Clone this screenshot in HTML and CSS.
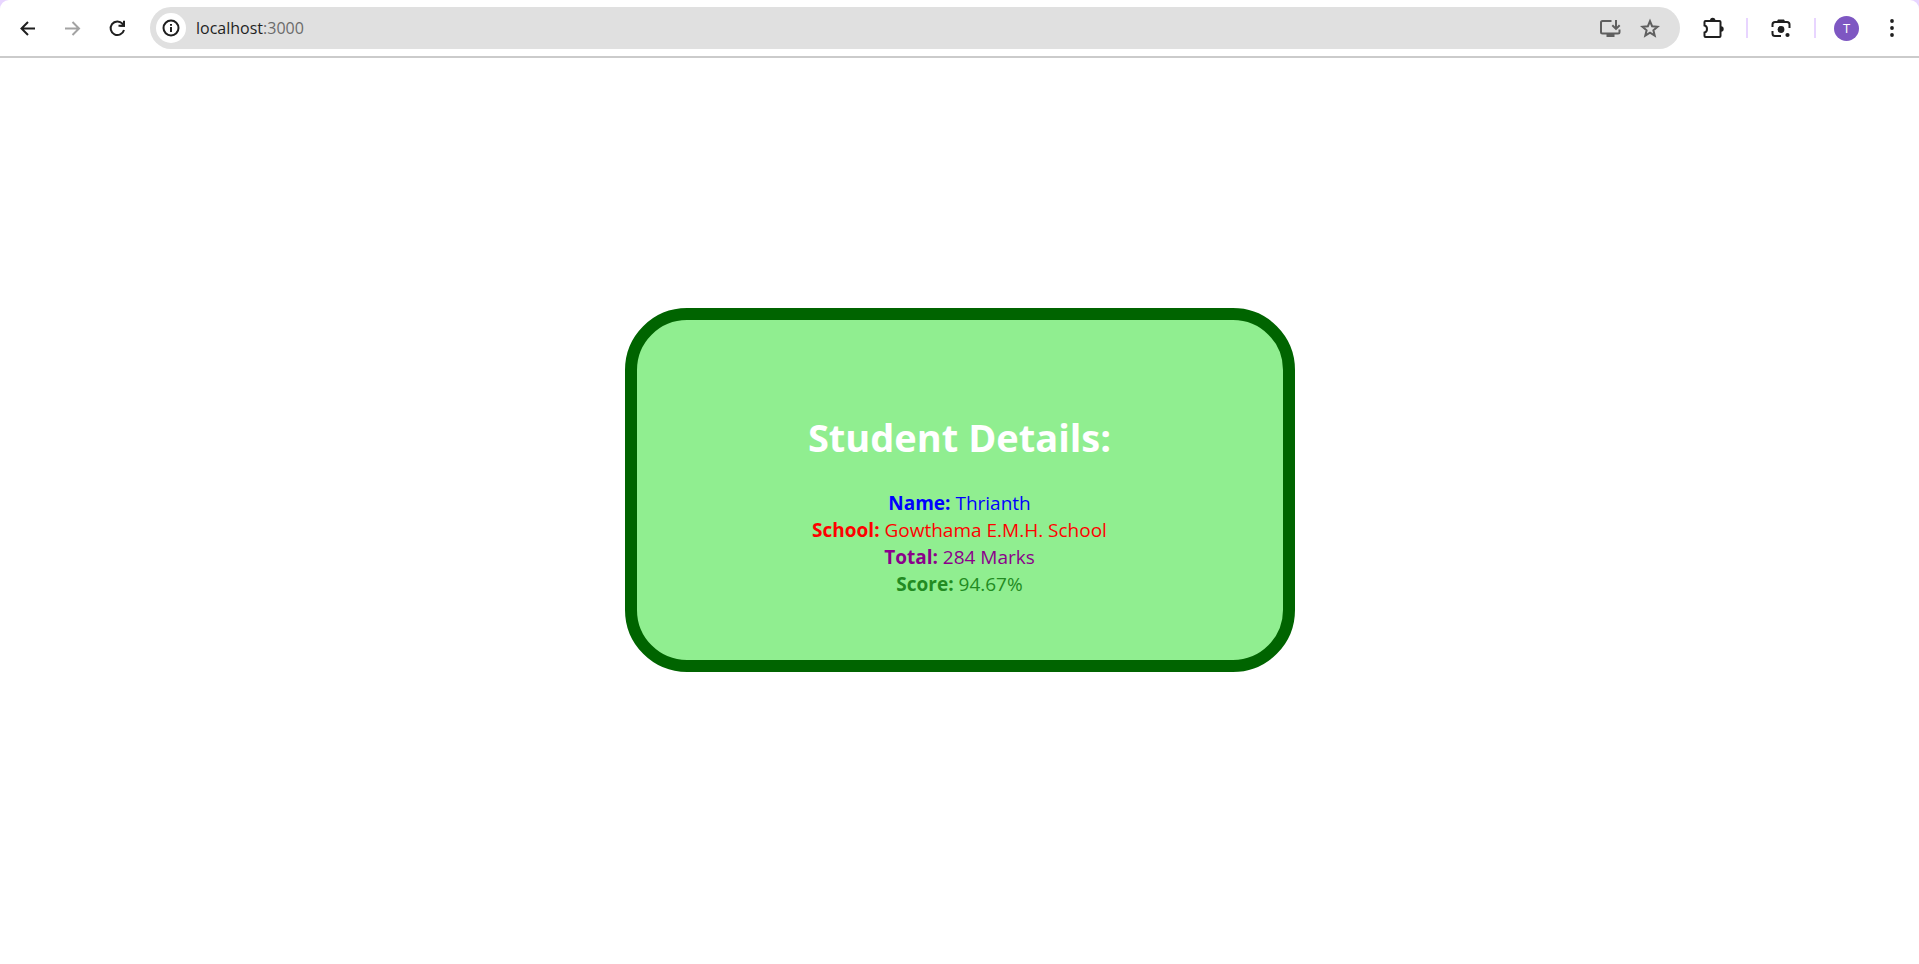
FILE: index.html
```html
<!DOCTYPE html>
<html lang="en">
<head>
<meta charset="utf-8">
<title>Student Details</title>
<link rel="stylesheet" href="styles.css">
</head>
<body>
<header class="toolbar-back">
<div class="toolbar">
  <nav class="nav" aria-label="Browser navigation">
    <button class="icon-button" type="button" aria-label="Back">
      <svg class="icon stroke" viewBox="0 0 20 20"><path d="M18 10.500H4M11 4l-6.500 6.500 6.500 6.500"/></svg>
    </button>
    <button class="icon-button muted" type="button" aria-label="Forward">
      <svg class="icon stroke" viewBox="0 0 20 20"><path d="M3 10.500h14M10.500 4l6.500 6.500-6.500 6.500"/></svg>
    </button>
    <button class="icon-button" type="button" aria-label="Reload">
      <svg class="icon stroke" viewBox="0 0 20 20"><path d="M17 12A6.800 6.800 0 1 1 15.500 5.700L17 7.200M17 2.800v5h-5.500"/><path class="fill" d="M18 2.800v6h-5z"/></svg>
    </button>
  </nav>
  <div class="address">
    <button class="site-info" type="button" aria-label="Site information">
      <svg class="icon stroke" viewBox="0 0 20 20"><circle cx="10" cy="10" r="7.500"/><path d="M10 9v5M10 6v1.800"/></svg>
    </button>
    <a class="url" href="#">localhost<span class="port">:3000</span></a>
    <button class="icon-button address-button" type="button" aria-label="Install app">
      <svg class="icon-wide stroke" viewBox="0 0 22 22"><path d="M12.500 4H3.500Q2 4 2 5.500V15q0 1.500 1.500 1.500H19q1.500 0 1.500-1.500v-2.500M17 3v8.500M13.300 8.200l3.700 3.700 3.700-3.700"/><path class="solid" d="M7.500 17h8v3h-8z"/></svg>
    </button>
    <button class="icon-button address-button" type="button" aria-label="Bookmark this page">
      <svg class="icon stroke" viewBox="0 0 20 20"><path d="M10 3.200l2.100 5 5.500.5-4.200 3.600 1.300 5.300-4.700-2.900-4.700 2.900 1.300-5.300-4.200-3.600 5.500-.5z"/></svg>
    </button>
  </div>
  <div class="actions">
    <button class="icon-button" type="button" aria-label="Extensions">
      <svg class="icon-wide stroke" viewBox="0 0 22 22"><path d="M3.500 4h14q1 0 1 1v14q0 1-1 1h-14q-1 0-1-1v-3.500Q5 15 5 12T2.500 8.500V5q0-1 1-1z"/><path class="fill" d="M8 3.500a2.700 2.700 0 0 1 5.400 0zM19 9.300a2.700 2.700 0 0 1 0 5.400z"/></svg>
    </button>
    <span class="divider"></span>
    <button class="icon-button" type="button" aria-label="Search with Lens">
      <svg class="icon-wide stroke" viewBox="0 0 22 22"><path d="M2.500 10V7.500Q2.500 5 5 5h12q2.500 0 2.500 2.500V11M2.500 14v2.500Q2.500 19 5 19h6"/><path class="fill" d="M6.500 5l1.500-2.500h6L15.500 5z"/><circle class="fill" cx="11" cy="12.500" r="3.400"/><circle class="fill" cx="17.500" cy="18" r="2.100"/></svg>
    </button>
    <span class="divider"></span>
    <button class="avatar" type="button" aria-label="Profile T">T</button>
    <button class="icon-button" type="button" aria-label="Menu">
      <svg class="icon" viewBox="0 0 20 20"><circle class="fill" cx="10" cy="3" r="1.900"/><circle class="fill" cx="10" cy="10" r="1.900"/><circle class="fill" cx="10" cy="17" r="1.900"/></svg>
    </button>
  </div>
</div>
</header>
<main class="page">
  <section class="card">
    <h1 class="title">Student Details:</h1>
    <div class="line name"><b>Name:</b> Thrianth</div>
    <div class="line school"><b>School:</b> Gowthama E.M.H. School</div>
    <div class="line total"><b>Total:</b> 284 Marks</div>
    <div class="line score"><b>Score:</b> 94.67%</div>
  </section>
</main>
</body>
</html>
```
FILE: styles.css
```css
* { box-sizing: border-box; }

body {
  display: flex;
  flex-direction: column;
  min-height: 100vh;
  margin: 0;
  background: #fff;
  font-family: "Open Sans", "Noto Sans", sans-serif;
}

button {
  padding: 0;
  border: 0;
  background: none;
  color: inherit;
  font: inherit;
}

.toolbar-back { background: #e8d5ff; }

.toolbar {
  display: flex;
  align-items: center;
  padding: 7px 12px;
  border-bottom: 2px solid #cbcbcb;
  border-radius: 9px 9px 0 0;
  background: #fff;
  color: #1f1f1f;
}

.nav { display: flex; gap: 15px; margin-right: 18px; }

.icon-button {
  display: flex;
  align-items: center;
  justify-content: center;
  width: 30px;
  height: 30px;
}

.muted { color: #a3a3a3; }
.icon { width: 20px; height: 20px; }
.icon-wide { width: 22px; height: 22px; }
.stroke { fill: none; stroke: currentColor; stroke-width: 2; }
.fill { fill: currentColor; stroke: none; }
.solid { fill: currentColor; stroke: none; }

.address {
  display: flex;
  flex: 1;
  align-items: center;
  gap: 10px;
  height: 42px;
  padding: 0 15px 0 6px;
  border-radius: 21px;
  background: #e0e0e0;
}

.site-info {
  display: flex;
  align-items: center;
  justify-content: center;
  width: 30px;
  height: 30px;
  border-radius: 50%;
  background: #fff;
}

.url {
  flex: 1;
  color: #1f1f1f;
  font-size: 16px;
  line-height: 24px;
  text-decoration: none;
}

.port { color: #6b6b6b; }
.address-button { color: #5f5f5f; }

.actions { display: flex; align-items: center; gap: 18px; margin-left: 18px; }

.divider { width: 2px; height: 20px; background: #e8d5ff; }

.avatar {
  width: 25px;
  height: 25px;
  border-radius: 50%;
  background: #7e57c2;
  color: #fff;
  font-size: 13px;
  line-height: 25px;
}

.page {
  display: flex;
  flex: 1;
  align-items: center;
  justify-content: center;
  padding-bottom: 42px;
}

.card {
  width: 35%;
  max-width: 670px;
  padding: 90px 24px 62px;
  border: 12px solid #006400;
  border-radius: 62px;
  background: #90ee90;
  font-size: 19px;
  line-height: 27px;
  text-align: center;
}

.title {
  margin: 0 0 26px;
  color: #fff;
  font-size: 38px;
  line-height: 54px;
}

.name { color: #0000ff; }
.school { color: #ff0000; }
.total { color: #8b008b; }
.score { color: #228b22; }
```
